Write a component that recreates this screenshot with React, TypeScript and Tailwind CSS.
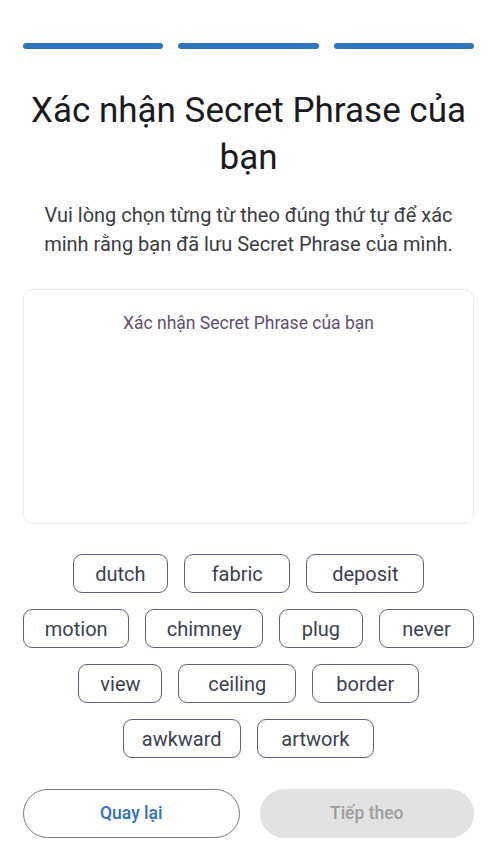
import React from "react";

const words: string[][] = [
  ["dutch", "fabric", "deposit"],
  ["motion", "chimney", "plug", "never"],
  ["view", "ceiling", "border"],
  ["awkward", "artwork"],
];

export default function App() {
  return (
    <div
      className="min-h-[864px] bg-white pl-[23px] pr-[20px] pt-[43px]"
      style={{ fontFamily: "Roboto, 'Noto Sans', sans-serif" }}
    >
      {/* step indicator */}
      <div className="flex gap-[15px]">
        <div className="h-[6px] flex-1 rounded-full bg-[#3076bd]" />
        <div className="h-[6px] flex-1 rounded-full bg-[#3076bd]" />
        <div className="h-[6px] flex-1 rounded-full bg-[#3076bd]" />
      </div>

      <h1 className="mt-[38px] text-center text-[35px] leading-[47px] text-[#1b1b1f]">
        Xác nhận Secret Phrase của bạn
      </h1>
      <p className="mt-[20px] px-[12px] text-center text-[20px] leading-[29px] text-[#3b3b42]">
        Vui lòng chọn từng từ theo đúng thứ tự để xác minh rằng bạn đã lưu Secret Phrase của mình.
      </p>

      {/* selected words area */}
      <div className="mt-[30px] h-[235px] rounded-[10px] border border-[#ececf0] pt-[22px]">
        <p className="text-center text-[17.5px] leading-[22px] text-[#5f4f72]">
          Xác nhận Secret Phrase của bạn
        </p>
      </div>

      {/* word chips, each sized by its letter count */}
      <div className="mt-[30px] flex flex-col gap-[16px]">
        {words.map((row, i) => (
          <div key={i} className="flex justify-center gap-[16px]">
            {row.map((w) => (
              <button
                key={w}
                className="flex h-[39px] items-center justify-center rounded-[9px] border border-[#6b5a7e] text-[20px] text-[#3c3e52]"
                style={{ width: `calc(${w.length}ch + 39px)` }}
              >
                {w}
              </button>
            ))}
          </div>
        ))}
      </div>

      {/* actions */}
      <div className="mt-[31px] flex gap-[20px]">
        <button className="h-[49px] flex-1 rounded-full border border-[#7a7880] text-[17.5px] font-medium text-[#2f70c0]">
          Quay lại
        </button>
        <button className="h-[49px] flex-1 rounded-full bg-[#e2e2e3] text-[17.5px] font-medium text-[#9d9d9f]">
          Tiếp theo
        </button>
      </div>
    </div>
  );
}
